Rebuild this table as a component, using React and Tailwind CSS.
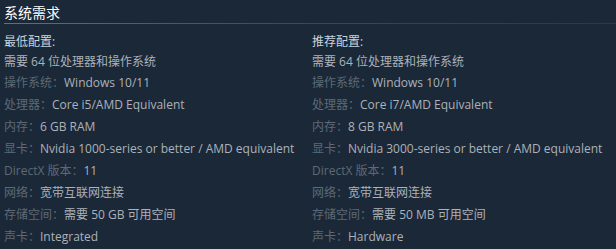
const font = {
  fontFamily: '"Open Sans", "Noto Sans CJK SC", sans-serif',
};

const minimum = {
  title: "最低配置:",
  os64: "需要 64 位处理器和操作系统",
  rows: [
    ["操作系统：", "Windows 10/11"],
    ["处理器：", "Core i5/AMD Equivalent"],
    ["内存：", "6 GB RAM"],
    ["显卡：", "Nvidia 1000-series or better / AMD equivalent"],
    ["DirectX 版本：", "11"],
    ["网络：", "宽带互联网连接"],
    ["存储空间：", "需要 50 GB 可用空间"],
    ["声卡：", "Integrated"],
  ],
};

const recommended = {
  title: "推荐配置:",
  os64: "需要 64 位处理器和操作系统",
  rows: [
    ["操作系统：", "Windows 10/11"],
    ["处理器：", "Core i7/AMD Equivalent"],
    ["内存：", "8 GB RAM"],
    ["显卡：", "Nvidia 3000-series or better / AMD equivalent"],
    ["DirectX 版本：", "11"],
    ["网络：", "宽带互联网连接"],
    ["存储空间：", "需要 50 MB 可用空间"],
    ["声卡：", "Hardware"],
  ],
};

const ReqColumn = ({ data }) => (
  <div className="w-[308px] shrink-0">
    <div className="text-[12px] leading-[20px] text-[#c6d4df]">{data.title}</div>
    <div className="text-[12px] leading-[20px] text-[#acb2b8]">{data.os64}</div>
    <ul className="flex flex-col">
      {data.rows.map(([label, value]) => (
        <li key={label} className="text-[12px] leading-[22px] whitespace-nowrap">
          <span className="text-[#5d6a75]">{label}</span>
          <span className="text-[#acb2b8]">{value}</span>
        </li>
      ))}
    </ul>
  </div>
);

export default function App() {
  return (
    <div className="w-[616px] h-[249px] bg-[#1b2838] overflow-hidden" style={font}>
      <div className="pl-1 pt-[3px]">
        <h2 className="text-[14px] leading-[19px] text-white">系统需求</h2>
        <div className="h-px mt-[1px] bg-gradient-to-r from-[#4a7594] via-[#2f4c63] to-[#243a4e]" />
      </div>
      <div className="flex pl-1 pt-[8px]">
        <ReqColumn data={minimum} />
        <ReqColumn data={recommended} />
      </div>
    </div>
  );
}
